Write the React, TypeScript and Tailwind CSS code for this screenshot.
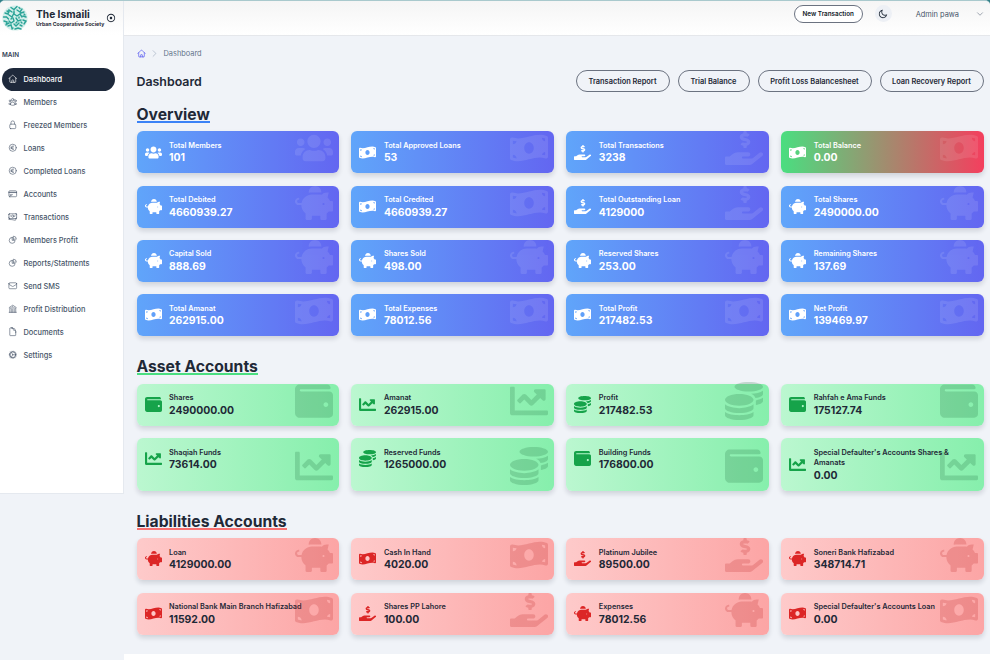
import type { IconType } from "react-icons";
import {
  FaChartLine,
  FaCoins,
  FaHandHoldingUsd,
  FaMoneyBillWave,
  FaPiggyBank,
  FaUsers,
  FaWallet,
} from "react-icons/fa";
import {
  HiOutlineBanknotes,
  HiOutlineBuildingLibrary,
  HiOutlineChartPie,
  HiOutlineChevronDown,
  HiOutlineChevronRight,
  HiOutlineCog,
  HiOutlineCreditCard,
  HiOutlineCurrencyEuro,
  HiOutlineDocument,
  HiOutlineEnvelope,
  HiOutlineHome,
  HiOutlineLockClosed,
  HiOutlineUserGroup,
} from "react-icons/hi2";
import { RiMoonLine, RiRecordCircleLine } from "react-icons/ri";

type Stat = { title: string; value: string; icon: IconType; mixed?: boolean };

const navItems: { title: string; icon: IconType; active?: boolean }[] = [
  { title: "Dashboard", icon: HiOutlineHome, active: true },
  { title: "Members", icon: HiOutlineUserGroup },
  { title: "Freezed Members", icon: HiOutlineLockClosed },
  { title: "Loans", icon: HiOutlineCurrencyEuro },
  { title: "Completed Loans", icon: HiOutlineCurrencyEuro },
  { title: "Accounts", icon: HiOutlineCreditCard },
  { title: "Transactions", icon: HiOutlineBanknotes },
  { title: "Members Profit", icon: HiOutlineChartPie },
  { title: "Reports/Statments", icon: HiOutlineChartPie },
  { title: "Send SMS", icon: HiOutlineEnvelope },
  { title: "Profit Distribution", icon: HiOutlineBuildingLibrary },
  { title: "Documents", icon: HiOutlineDocument },
  { title: "Settings", icon: HiOutlineCog },
];

const overview: Stat[] = [
  { title: "Total Members", value: "101", icon: FaUsers },
  { title: "Total Approved Loans", value: "53", icon: FaMoneyBillWave },
  { title: "Total Transactions", value: "3238", icon: FaHandHoldingUsd },
  { title: "Total Balance", value: "0.00", icon: FaMoneyBillWave, mixed: true },
  { title: "Total Debited", value: "4660939.27", icon: FaPiggyBank },
  { title: "Total Credited", value: "4660939.27", icon: FaMoneyBillWave },
  { title: "Total Outstanding Loan", value: "4129000", icon: FaHandHoldingUsd },
  { title: "Total Shares", value: "2490000.00", icon: FaPiggyBank },
  { title: "Capital Sold", value: "888.69", icon: FaPiggyBank },
  { title: "Shares Sold", value: "498.00", icon: FaPiggyBank },
  { title: "Reserved Shares", value: "253.00", icon: FaPiggyBank },
  { title: "Remaining Shares", value: "137.69", icon: FaPiggyBank },
  { title: "Total Amanat", value: "262915.00", icon: FaMoneyBillWave },
  { title: "Total Expenses", value: "78012.56", icon: FaMoneyBillWave },
  { title: "Total Profit", value: "217482.53", icon: FaMoneyBillWave },
  { title: "Net Profit", value: "139469.97", icon: FaMoneyBillWave },
];

const assets: Stat[] = [
  { title: "Shares", value: "2490000.00", icon: FaWallet },
  { title: "Amanat", value: "262915.00", icon: FaChartLine },
  { title: "Profit", value: "217482.53", icon: FaCoins },
  { title: "Rahfah e Ama Funds", value: "175127.74", icon: FaWallet },
  { title: "Shaqiah Funds", value: "73614.00", icon: FaChartLine },
  { title: "Reserved Funds", value: "1265000.00", icon: FaCoins },
  { title: "Building Funds", value: "176800.00", icon: FaWallet },
  { title: "Special Defaulter's Accounts Shares & Amanats", value: "0.00", icon: FaChartLine },
];

const liabilities: Stat[] = [
  { title: "Loan", value: "4129000.00", icon: FaPiggyBank },
  { title: "Cash In Hand", value: "4020.00", icon: FaMoneyBillWave },
  { title: "Platinum Jubilee", value: "89500.00", icon: FaHandHoldingUsd },
  { title: "Soneri Bank Hafizabad", value: "348714.71", icon: FaPiggyBank },
  { title: "National Bank Main Branch Hafizabad", value: "11592.00", icon: FaMoneyBillWave },
  { title: "Shares PP Lahore", value: "100.00", icon: FaHandHoldingUsd },
  { title: "Expenses", value: "78012.56", icon: FaPiggyBank },
  { title: "Special Defaulter's Accounts Loan", value: "0.00", icon: FaMoneyBillWave },
];

const tones = {
  blue: {
    card: "from-[#60a5fa] to-[#6366f1] text-white",
    icon: "text-white",
    ghost: "text-white opacity-10",
    line: "border-[#3b82f6]",
  },
  green: {
    card: "from-[#bbf7d0] to-[#86efac] text-[#1f2937]",
    icon: "text-[#16a34a]",
    ghost: "text-[#166534] opacity-20",
    line: "border-[#4ade80]",
  },
  red: {
    card: "from-[#fecaca] to-[#fca5a5] text-[#1f2937]",
    icon: "text-[#dc2626]",
    ghost: "text-[#b91c1c] opacity-20",
    line: "border-[#f87171]",
  },
};

function Logo() {
  return (
    <svg viewBox="0 0 26 26" className="h-[26px] w-[26px] shrink-0">
      <circle cx="13" cy="13" r="12.6" fill="#d3eeea" />
      <g fill="none" stroke="#2ba397" strokeWidth="1.4" strokeLinecap="round">
        <path d="M3 8l3 1 1-4 3 2M9 2.500l3 2 3-3M15 5l3 2 2-3M19 8l3-1M1.500 12h3l2 2M7 10l3 2 2-4M12 9l3 2 3-2 2 3M21 11l3 1" />
        <path d="M2 16l3 1-1 3M7 16l2 2 3-2-1-3M14 13l2 3 3-1M21 15l3 1-2 3M6 21l3-1 1 3M12 19l2 2 3-3M13 24l3-1 3 1M18 20l2 1" />
        <path d="M5 6l2 1M12 6v2M17 2.500l1 1M22 9l1 1M9 14l1-1M17 12v1M5 19l2-1M15 17l-1 1M19 17l1 1M10 24l1-1" />
      </g>
    </svg>
  );
}

function StatCard({ stat, tone }: { stat: Stat; tone: keyof typeof tones }) {
  const t = tones[tone];
  const Icon = stat.icon;
  const bg = stat.mixed ? "from-[#4ade80] to-[#f43f5e] text-white" : t.card;
  return (
    <div
      className={`relative min-h-[42px] rounded-[6px] bg-linear-to-r/srgb px-[8px] pt-[9.400px] pb-[7.800px] shadow-[0_3px_5px_rgba(15,23,42,0.14)] ${bg}`}
    >
      <div className="flex items-center">
        <Icon className={`mr-[7.500px] mb-[2px] size-[17px] shrink-0 ${t.icon}`} />
        <div className="min-w-0 flex-1">
          <p className="text-[7.300px] leading-[10.500px] font-semibold">{stat.title}</p>
          <p className="text-[10.400px] leading-[14px] font-bold">{stat.value}</p>
        </div>
      </div>
      <Icon className={`absolute right-[6px] bottom-[6px] size-[38px] ${t.ghost}`} />
    </div>
  );
}

function Section({ title, stats, tone }: { title: string; stats: Stat[]; tone: keyof typeof tones }) {
  return (
    <section>
      <h2
        className={`w-fit border-b-2 pt-[2px] text-[15.700px] leading-[13px] font-bold text-[#1f2937] ${tones[tone].line}`}
      >
        {title}
      </h2>
      <div className="mt-[8.700px] grid grid-cols-4 gap-x-[12.600px] gap-y-[12.300px]">
        {stats.map((stat) => (
          <StatCard key={stat.title} stat={stat} tone={tone} />
        ))}
      </div>
    </section>
  );
}

export default function App() {
  return (
    <div className="h-[660px] w-[990px] overflow-hidden bg-[#338088] font-[Inter,sans-serif]">
      <div className="flex h-full overflow-hidden rounded-t-[5px] border-t border-[#a9c9cd] bg-[#f0f3f8]">
        <aside className="h-[493px] w-[124px] shrink-0 border-r border-b border-[#e5e9ef] bg-white">
          <div className="flex h-[34px] items-center bg-gradient-to-b from-[#f5f5f5] to-white pl-[2px]">
            <Logo />
            <div className="ml-[8px] whitespace-nowrap text-[#1f2937]">
              <p className="text-[10.200px] leading-[11px] font-bold">The Ismaili</p>
              <p className="text-[5.200px] leading-[8px] font-bold">Urban Cooperative Society</p>
            </div>
            <RiRecordCircleLine className="ml-[2px] size-[10px] shrink-0 text-[#1f2937]" />
          </div>
          <p className="mt-[16px] pl-[2px] text-[6.300px] leading-[9px] font-semibold text-[#334155]">MAIN</p>
          <nav className="mt-[7.500px] pr-[8px] pl-[2px]">
            {navItems.map((item) => (
              <a
                key={item.title}
                className={`flex h-[23px] items-center gap-[6px] rounded-full pl-[6px] text-[7.400px] font-medium ${
                  item.active ? "bg-[#1e293b] text-white" : "text-[#475569]"
                }`}
              >
                <item.icon className="size-[9.500px] shrink-0" />
                <span className="pt-px">{item.title}</span>
              </a>
            ))}
          </nav>
        </aside>

        <div className="flex min-w-0 flex-1 flex-col">
          <header className="flex h-[35px] shrink-0 items-start justify-end border-b border-[#e5e7eb] bg-gradient-to-b from-[#f5f5f5] to-white pt-[4px] pr-[5px]">
            <button className="h-[18px] w-[69px] rounded-full border border-[#6b7280] bg-white pt-px text-[6.300px] font-semibold text-[#111827]">
              New Transaction
            </button>
            <span className="ml-[12px] flex size-[17px] items-center justify-center rounded-full bg-[#edf0f5]">
              <RiMoonLine className="size-[10px] text-[#1f2937]" />
            </span>
            <span className="ml-[24px] pt-px text-[7.400px] leading-[18px] text-[#475569]">Admin pawa</span>
            <HiOutlineChevronDown className="mt-[5px] mr-px ml-[17px] size-[8px] text-[#475569]" />
          </header>

          <main className="pr-[6.500px] pl-[12.500px]">
            <div className="mt-[12px] flex h-[11px] items-center text-[7.400px] text-[#64748b]">
              <HiOutlineHome className="size-[9px] text-[#6366f1]" strokeWidth={2} />
              <HiOutlineChevronRight className="mx-[4.500px] size-[9px] text-[#94a3b8]" />
              Dashboard
            </div>
            <div className="mt-[11px] flex h-[22px] items-center justify-between">
              <h1 className="pt-[2px] text-[12.400px] font-semibold text-[#1f2937]">Dashboard</h1>
              <div className="flex gap-[8px] text-[7.400px] font-semibold text-[#1f2937]">
                <button className="h-[22px] w-[94px] rounded-full border border-[#6b7280] pt-px">
                  Transaction Report
                </button>
                <button className="h-[22px] w-[72px] rounded-full border border-[#6b7280] pt-px">Trial Balance</button>
                <button className="h-[22px] w-[114px] rounded-full border border-[#6b7280] pt-px">
                  Profit Loss Balancesheet
                </button>
                <button className="h-[22px] w-[104px] rounded-full border border-[#6b7280] pt-px">
                  Loan Recovery Report
                </button>
              </div>
            </div>
            <div className="mt-[13.700px] flex flex-col gap-[22.100px]">
              <Section title="Overview" stats={overview} tone="blue" />
              <Section title="Asset Accounts" stats={assets} tone="green" />
              <Section title="Liabilities Accounts" stats={liabilities} tone="red" />
            </div>
          </main>
          <footer className="mt-auto h-[6px] shrink-0 bg-white" />
        </div>
      </div>
    </div>
  );
}
